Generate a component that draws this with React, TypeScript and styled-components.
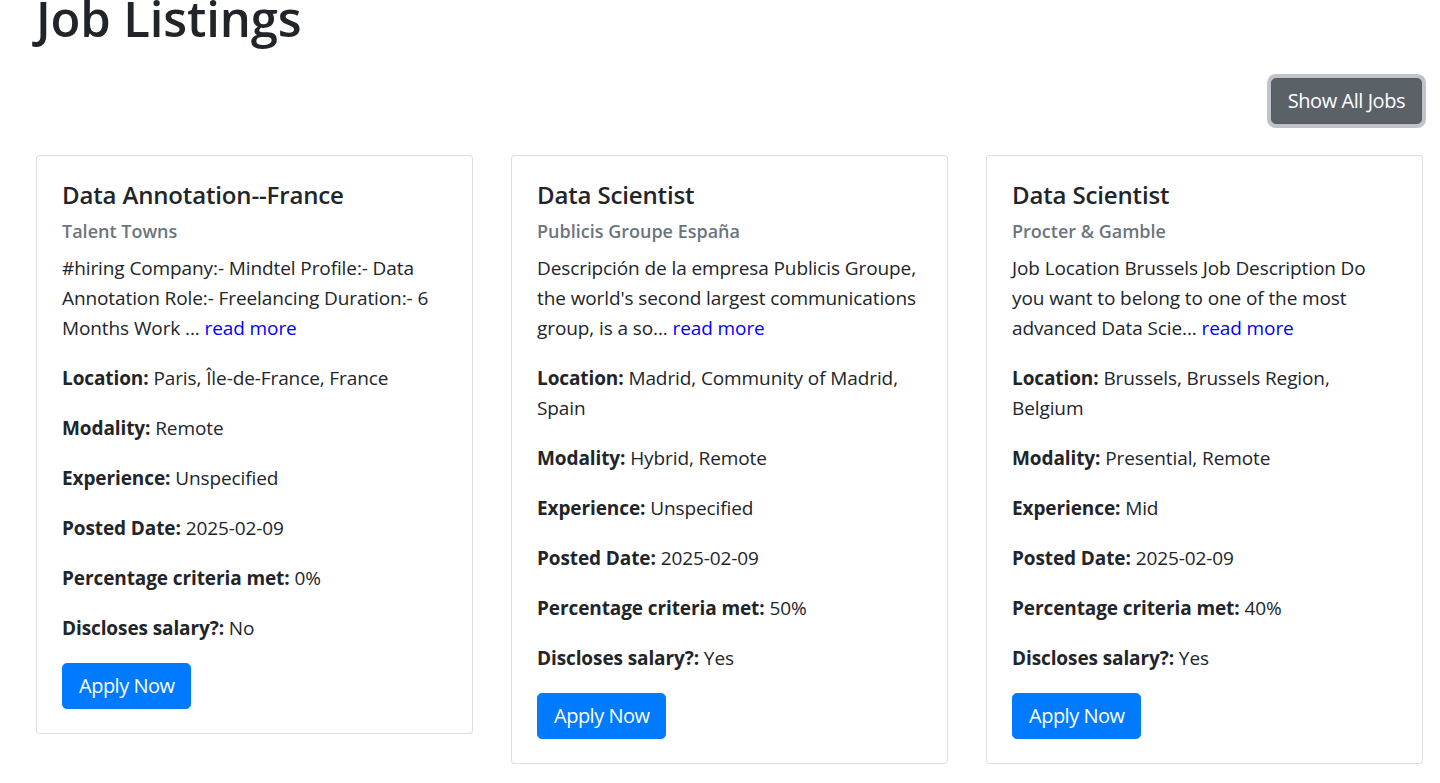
import React from "react";
import styled, { createGlobalStyle } from "styled-components";

const GlobalStyle = createGlobalStyle`
  html, body {
    margin: 0;
    padding: 0;
    background: #ffffff;
  }
  body {
    font-family: "Open Sans", "Noto Sans", "Liberation Sans", sans-serif;
    color: #212529;
    font-size: 19px;
    line-height: 30px;
    letter-spacing: -0.1px;
    overflow: hidden;
  }
`;

const Page = styled.main`
  padding: 0 18px 0 36px;
`;

const PageTitle = styled.h1`
  margin: -11px 0 0;
  font-size: 49px;
  font-weight: 600;
  line-height: 1.2;
  letter-spacing: -0.15px;
  color: #212529;
`;

const Toolbar = styled.div`
  display: flex;
  justify-content: flex-end;
  margin: 30px 0 31px;
`;

const SecondaryButton = styled.button`
  font-family: inherit;
  font-size: 20px;
  line-height: 28px;
  letter-spacing: -0.45px;
  padding: 8px 16px;
  color: #ffffff;
  background: #5a6268;
  border: 1px solid #545b62;
  border-radius: 4.8px;
  box-shadow: 0 0 0 4px rgba(130, 138, 145, 0.5);
  cursor: pointer;
`;

const CardGrid = styled.section`
  display: grid;
  grid-template-columns: repeat(3, 437px);
  column-gap: 38px;
  align-items: start;
`;

const Card = styled.article`
  border: 1px solid rgba(0, 0, 0, 0.125);
  border-radius: 4px;
  padding: 24px 24px 24px 25px;
  background: #ffffff;
`;

const CardTitle = styled.h4`
  margin: 0 0 10px;
  font-size: 24px;
  font-weight: 600;
  line-height: 30px;
  letter-spacing: -0.15px;
`;

const CardSubtitle = styled.h6`
  margin: 0 0 11px;
  font-size: 18px;
  font-weight: 600;
  line-height: 22px;
  letter-spacing: 0;
  color: #6c757d;
`;

const Text = styled.p`
  margin: 0 0 20px;
  font-size: 19px;
  line-height: 30px;
`;

const ReadMore = styled.a`
  color: #0000ff;
  text-decoration: none;
`;

const Label = styled.strong`
  font-weight: 700;
`;

const ApplyButton = styled.a`
  display: inline-block;
  font-size: 20px;
  line-height: 28px;
  letter-spacing: -0.5px;
  padding: 8px 16px;
  color: #ffffff;
  background: #007bff;
  border: 1px solid #007bff;
  border-radius: 4.8px;
  text-decoration: none;
`;

type Job = {
  title: string;
  company: string;
  description: string;
  location: string;
  modality: string;
  experience: string;
  posted: string;
  criteria: string;
  salary: string;
};

const jobs: Job[] = [
  {
    title: "Data Annotation--France",
    company: "Talent Towns",
    description:
      "#hiring Company:- Mindtel Profile:- Data Annotation Role:- Freelancing Duration:- 6 Months Work ...",
    location: "Paris, Île-de-France, France",
    modality: "Remote",
    experience: "Unspecified",
    posted: "2025-02-09",
    criteria: "0%",
    salary: "No",
  },
  {
    title: "Data Scientist",
    company: "Publicis Groupe España",
    description:
      "Descripción de la empresa Publicis Groupe, the world's second largest communications group, is a so...",
    location: "Madrid, Community of Madrid, Spain",
    modality: "Hybrid, Remote",
    experience: "Unspecified",
    posted: "2025-02-09",
    criteria: "50%",
    salary: "Yes",
  },
  {
    title: "Data Scientist",
    company: "Procter & Gamble",
    description:
      "Job Location Brussels Job Description Do you want to belong to one of the most advanced Data Scie...",
    location: "Brussels, Brussels Region, Belgium",
    modality: "Presential, Remote",
    experience: "Mid",
    posted: "2025-02-09",
    criteria: "40%",
    salary: "Yes",
  },
];

function JobCard({ job }: { job: Job }) {
  return (
    <Card>
      <CardTitle>{job.title}</CardTitle>
      <CardSubtitle>{job.company}</CardSubtitle>
      <Text>
        {job.description} <ReadMore href="#">read more</ReadMore>
      </Text>
      <Text>
        <Label>Location:</Label> {job.location}
      </Text>
      <Text>
        <Label>Modality:</Label> {job.modality}
      </Text>
      <Text>
        <Label>Experience:</Label> {job.experience}
      </Text>
      <Text>
        <Label>Posted Date:</Label> {job.posted}
      </Text>
      <Text>
        <Label>Percentage criteria met:</Label> {job.criteria}
      </Text>
      <Text>
        <Label>Discloses salary?:</Label> {job.salary}
      </Text>
      <ApplyButton href="#">Apply Now</ApplyButton>
    </Card>
  );
}

export default function App() {
  return (
    <>
      <GlobalStyle />
      <Page>
        <PageTitle>Job Listings</PageTitle>
        <Toolbar>
          <SecondaryButton type="button">Show All Jobs</SecondaryButton>
        </Toolbar>
        <CardGrid>
          {jobs.map((job, i) => (
            <JobCard key={i} job={job} />
          ))}
        </CardGrid>
      </Page>
    </>
  );
}
